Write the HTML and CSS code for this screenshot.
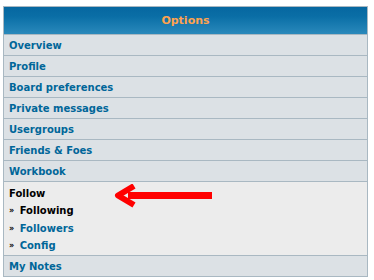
FILE: index.html
```html
<!DOCTYPE html>
<html lang="en">

<head>
    <meta charset="UTF-8">
    <title>Options</title>
    <link rel="stylesheet" href="styles.css">
</head>

<body>
    <div class="panel">
        <div class="panelHead">Options</div>
        <div class="navRow"><a href="#">Overview</a></div>
        <div class="navRow"><a href="#">Profile</a></div>
        <div class="navRow"><a href="#">Board preferences</a></div>
        <div class="navRow"><a href="#">Private messages</a></div>
        <div class="navRow"><a href="#">Usergroups</a></div>
        <div class="navRow"><a href="#">Friends &amp; Foes</a></div>
        <div class="navRow"><a href="#">Workbook</a></div>
        <div class="navOpen">
            <div class="openTitle">Follow</div>
            <ul class="subList">
                <li class="current"><span class="quote">&raquo;</span> Following</li>
                <li><span class="quote">&raquo;</span> <a href="#">Followers</a></li>
                <li><span class="quote">&raquo;</span> <a href="#">Config</a></li>
            </ul>
            <svg class="pointer" width="100" height="24" viewBox="0 0 100 24">
                <rect x="14" y="8" width="84" height="7" fill="#ff0000" />
                <path d="M20 2 L4 11.5 L20 21" fill="none" stroke="#ff0000" stroke-width="6" stroke-linejoin="round" />
            </svg>
        </div>
        <div class="navRow lastRow"><a href="#">My Notes</a></div>
    </div>
</body>

</html>
```

FILE: styles.css
```css
body {
    margin: 0;
    font-family: "DejaVu Sans", Verdana, sans-serif;
    font-size: 10px;
    background-color: #ffffff;
}

.panel {
    width: 363px;
    margin: 6px 3px;
    border: 1px solid #a9b8c2;
}

.panelHead {
    height: 27px;
    line-height: 27px;
    text-align: center;
    font-weight: bold;
    font-size: 11px;
    color: #ffa34f;
    background: linear-gradient(#0667a0, #0a6ea6 35%, #2a89bb);
    border-bottom: 1px solid #a9b8c2;
}

.navRow {
    height: 19px;
    padding-top: 1px;
    line-height: 20px;
    padding-left: 5px;
    background-color: #dce1e5;
    border-bottom: 1px solid #a9b8c2;
    font-weight: bold;
}

.lastRow {
    border-bottom: none;
}

a {
    color: #006699;
    text-decoration: none;
}

.navOpen {
    position: relative;
    height: 73px;
    padding-left: 5px;
    background-color: #ececec;
    border-bottom: 1px solid #a9b8c2;
    font-weight: bold;
}

.openTitle {
    padding-top: 4px;
    line-height: 16px;
    color: #000000;
}

.subList {
    list-style: none;
    margin: 0;
    padding: 0;
}

.subList li {
    line-height: 17.5px;
    color: #000000;
}

.quote {
    font-size: 8px;
    vertical-align: 1px;
    margin-right: 2px;
}

.pointer {
    position: absolute;
    left: 110px;
    top: 2px;
}
```
